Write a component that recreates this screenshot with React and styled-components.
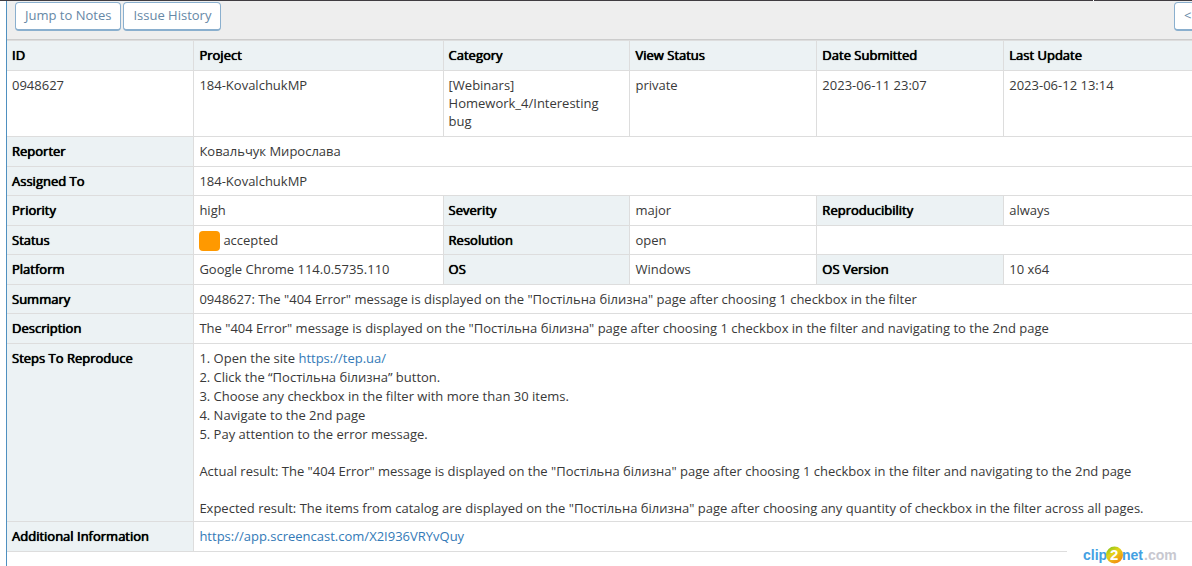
import React from "react";
import styled, { createGlobalStyle } from "styled-components";

const GlobalStyle = createGlobalStyle`
  *, *::before, *::after { box-sizing: border-box; }
  html { height: 100%; }
  body {
    margin: 0;
    height: 100%;
    overflow-x: hidden;
    background: #fff;
    color: #393939;
    font-family: "Open Sans", "Noto Sans", sans-serif;
    font-size: 13px;
    line-height: 18px;
  }
  #root { height: 100%; }
`;

const Page = styled.div`
  position: relative;
  display: flex;
  flex-direction: column;
  min-height: 100%;
  overflow: hidden;
`;

const TopEdge = styled.div`
  display: flex;
  flex: none;
  gap: 1px;
  height: 1px;
  background: #fff;
`;

const EdgePart = styled.div`
  flex: ${(p) => p.$grow};
  background: #403c41;
`;

/* The panel runs on past the right edge of the window. */
const Panel = styled.main`
  flex: 1;
  width: calc(100% + 55px);
  margin-left: 6px;
  border-left: 1px solid #4f90c0;
`;

const Toolbar = styled.nav`
  display: flex;
  gap: 2px;
  height: 39px;
  padding: 1px 45px 0 8px;
  background: #eee;
  border-bottom: 1px solid #ccc;
`;

const Button = styled.button`
  height: 29px;
  padding: 0 9px 2px;
  border: 1px solid #8aafce;
  border-bottom-width: 2px;
  border-radius: 4px;
  background: #fff;
  color: #6688a6;
  font: inherit;
  white-space: nowrap;
  cursor: pointer;
`;

const PreviousButton = styled(Button)`
  width: 34px;
  margin-left: auto;
  text-align: left;
`;

const Table = styled.table`
  width: 100%;
  table-layout: fixed;
  border-collapse: collapse;
  border-bottom: 1px solid #ddd;
`;

const Col = styled.col`
  width: ${(p) => p.$width};
`;

const Row = styled.tr`
  height: 30px;
  border-top: 1px solid #ddd;

  &:nth-child(even) { height: 29px; }
  &:nth-child(2) { height: 66px; }
`;

const Head = styled.th`
  padding: 5px 5px 3px;
  border-left: 1px solid #ddd;
  background: #ecf2f4;
  color: #000;
  font-weight: 400;
  text-align: left;
  text-shadow: 0 0 1px #000, 0 0 0 #000;
  vertical-align: top;
  &:first-child { border-left: 0; }
`;

const Cell = styled.td`
  padding: 5px 5px 3px;
  border-left: 1px solid #ddd;
  vertical-align: top;
  &:first-child { border-left: 0; }
`;

const Link = styled.a`
  color: #337ab7;
  text-decoration: none;
`;

const Status = styled.div`
  display: flex;
  gap: 3px;
  height: 18px;
`;

const Swatch = styled.span`
  width: 21px;
  height: 20px;
  border-radius: 4px;
  background: #f90;
`;

const Steps = styled.div`
  display: flex;
  flex-direction: column;
  gap: 18px;
  line-height: 19px;
`;

const Paragraph = styled.p`
  margin: 0;
`;

const Watermark = styled.div`
  position: absolute;
  right: 0;
  bottom: 0;
  width: 125px;
  height: 23px;
  background: #fff;
`;

function ClipLogo() {
  return (
    <svg width="125" height="23" viewBox="0 0 125 23" role="img" aria-label="clip2net.com">
      <defs>
        <linearGradient id="ball" x1="0" y1="0" x2="0.7" y2="1">
          <stop offset="0" stopColor="#6fbf1c" />
          <stop offset="0.45" stopColor="#e3d51a" />
          <stop offset="1" stopColor="#f58a10" />
        </linearGradient>
      </defs>
      <g fontFamily="Liberation Sans, sans-serif" fontSize="14" fontWeight="700">
        <text x="16" y="17" fill="#43a0e2">clip</text>
        <text x="55" y="17" fill="#43a0e2">net</text>
        <text x="77" y="17" fill="#c8c8d0">.com</text>
        <circle cx="47.500" cy="12" r="8.500" fill="url(#ball)" />
        <text x="43" y="17" fill="#fff" fontSize="15">2</text>
      </g>
    </svg>
  );
}

export default function App() {
  return (
    <>
      <GlobalStyle />
      <Page>
        <TopEdge>
          <EdgePart $grow={1093} />
          <EdgePart $grow={98} />
        </TopEdge>
        <Panel>
          <Toolbar>
            <Button type="button">Jump to Notes</Button>
            <Button type="button">Issue History</Button>
            <PreviousButton type="button">&lt;</PreviousButton>
          </Toolbar>
          <Table>
            <colgroup>
              <Col $width="15%" />
              <Col $width="20%" />
              <Col $width="15%" />
              <Col $width="15%" />
              <Col $width="15%" />
              <Col $width="20%" />
            </colgroup>
            <tbody>
              <Row>
                <Head scope="col">ID</Head>
                <Head scope="col">Project</Head>
                <Head scope="col">Category</Head>
                <Head scope="col">View Status</Head>
                <Head scope="col">Date Submitted</Head>
                <Head scope="col">Last Update</Head>
              </Row>
              <Row>
                <Cell>0948627</Cell>
                <Cell>184-KovalchukMP</Cell>
                <Cell>[Webinars] Homework_4/Interesting bug</Cell>
                <Cell>private</Cell>
                <Cell>2023-06-11 23:07</Cell>
                <Cell>2023-06-12 13:14</Cell>
              </Row>
              <Row>
                <Head scope="row">Reporter</Head>
                <Cell colSpan={5}>Ковальчук Мирослава</Cell>
              </Row>
              <Row>
                <Head scope="row">Assigned To</Head>
                <Cell colSpan={5}>184-KovalchukMP</Cell>
              </Row>
              <Row>
                <Head scope="row">Priority</Head>
                <Cell>high</Cell>
                <Head scope="row">Severity</Head>
                <Cell>major</Cell>
                <Head scope="row">Reproducibility</Head>
                <Cell>always</Cell>
              </Row>
              <Row>
                <Head scope="row">Status</Head>
                <Cell>
                  <Status><Swatch />accepted</Status>
                </Cell>
                <Head scope="row">Resolution</Head>
                <Cell>open</Cell>
                <Cell colSpan={2} />
              </Row>
              <Row>
                <Head scope="row">Platform</Head>
                <Cell>Google Chrome 114.0.5735.110</Cell>
                <Head scope="row">OS</Head>
                <Cell>Windows</Cell>
                <Head scope="row">OS Version</Head>
                <Cell>10 x64</Cell>
              </Row>
              <Row>
                <Head scope="row">Summary</Head>
                <Cell colSpan={5}>
                  0948627: The "404 Error" message is displayed on the "Постільна білизна" page after choosing 1 checkbox in the filter
                </Cell>
              </Row>
              <Row>
                <Head scope="row">Description</Head>
                <Cell colSpan={5}>
                  The "404 Error" message is displayed on the "Постільна білизна" page after choosing 1 checkbox in the filter and navigating to the 2nd page
                </Cell>
              </Row>
              <Row>
                <Head scope="row">Steps To Reproduce</Head>
                <Cell colSpan={5}>
                  <Steps>
                    <Paragraph>
                      1. Open the site <Link href="https://tep.ua/">https://tep.ua/</Link><br />
                      2. Click the “Постільна білизна” button.<br />
                      3. Choose any checkbox in the filter with more than 30 items.<br />
                      4. Navigate to the 2nd page<br />
                      5. Pay attention to the error message.
                    </Paragraph>
                    <Paragraph>
                      Actual result: The "404 Error" message is displayed on the "Постільна білизна" page after choosing 1 checkbox in the filter and navigating to the 2nd page
                    </Paragraph>
                    <Paragraph>
                      Expected result: The items from catalog are displayed on the "Постільна білизна" page after choosing any quantity of checkbox in the filter across all pages.
                    </Paragraph>
                  </Steps>
                </Cell>
              </Row>
              <Row>
                <Head scope="row">Additional Information</Head>
                <Cell colSpan={5}>
                  <Link href="https://app.screencast.com/X2I936VRYvQuy">https://app.screencast.com/X2I936VRYvQuy</Link>
                </Cell>
              </Row>
            </tbody>
          </Table>
        </Panel>
        <Watermark><ClipLogo /></Watermark>
      </Page>
    </>
  );
}
